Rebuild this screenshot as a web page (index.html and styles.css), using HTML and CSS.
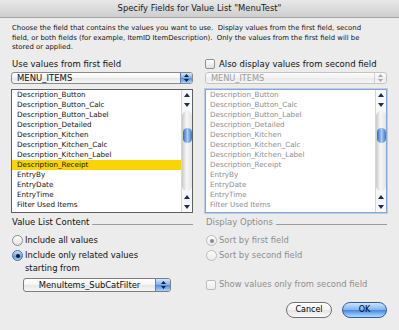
FILE: index.html
```html
<!DOCTYPE html>
<html lang="en">

<head>
    <meta charset="UTF-8">
    <meta name="viewport" content="width=device-width, initial-scale=1.0">
    <title>Specify Fields for Value List</title>
    <link rel="stylesheet" href="styles.css">
</head>

<body>
    <div class="window">
        <div class="titlebar">Specify Fields for Value List "MenuTest"</div>

        <div class="content">
            <p class="desc">Choose the field that contains the values you want to use.&nbsp; Display values from the first field, second<br>
                field, or both fields (for example, ItemID ItemDescription).&nbsp; Only the values from the first field will be<br>
                stored or applied.</p>

            <div class="cols top">
                <!-- first field -->
                <div class="col">
                    <div class="label">Use values from first field</div>
                    <div class="popup">
                        <span class="popup-text">MENU_ITEMS</span>
                        <span class="popup-btn">
                            <svg width="5" height="8" viewBox="0 0 5 8"><path d="M2.5 0L5 3H0z M2.5 8L0 5h5z" /></svg>
                        </span>
                    </div>
                    <div class="list">
                        <ul class="items">
                            <li>Description_Button</li>
                            <li>Description_Button_Calc</li>
                            <li>Description_Button_Label</li>
                            <li>Description_Detailed</li>
                            <li>Description_Kitchen</li>
                            <li>Description_Kitchen_Calc</li>
                            <li>Description_Kitchen_Label</li>
                            <li class="selected">Description_Receipt</li>
                            <li>EntryBy</li>
                            <li>EntryDate</li>
                            <li>EntryTime</li>
                            <li>Filter Used Items</li>
                        </ul>
                        <div class="scrollbar">
                            <span class="arrow"><svg width="6" height="4" viewBox="0 0 6 4"><path d="M3 0L6 4H0z" /></svg></span>
                            <span class="arrow"><svg width="6" height="4" viewBox="0 0 6 4"><path d="M3 4L0 0h6z" /></svg></span>
                            <span class="track"><span class="thumb"></span></span>
                            <span class="arrow"><svg width="6" height="4" viewBox="0 0 6 4"><path d="M3 0L6 4H0z" /></svg></span>
                            <span class="arrow"><svg width="6" height="4" viewBox="0 0 6 4"><path d="M3 4L0 0h6z" /></svg></span>
                        </div>
                    </div>
                </div>

                <!-- second field -->
                <div class="col">
                    <div class="label check-row">
                        <span class="checkbox"></span>
                        <span>Also display values from second field</span>
                    </div>
                    <div class="popup disabled">
                        <span class="popup-text">MENU_ITEMS</span>
                        <span class="popup-btn">
                            <svg width="5" height="8" viewBox="0 0 5 8"><path d="M2.5 0L5 3H0z M2.5 8L0 5h5z" /></svg>
                        </span>
                    </div>
                    <div class="list disabled">
                        <ul class="items">
                            <li>Description_Button</li>
                            <li>Description_Button_Calc</li>
                            <li>Description_Button_Label</li>
                            <li>Description_Detailed</li>
                            <li>Description_Kitchen</li>
                            <li>Description_Kitchen_Calc</li>
                            <li>Description_Kitchen_Label</li>
                            <li>Description_Receipt</li>
                            <li>EntryBy</li>
                            <li>EntryDate</li>
                            <li>EntryTime</li>
                            <li>Filter Used Items</li>
                        </ul>
                        <div class="scrollbar">
                            <span class="arrow"><svg width="6" height="4" viewBox="0 0 6 4"><path d="M3 0L6 4H0z" /></svg></span>
                            <span class="arrow"><svg width="6" height="4" viewBox="0 0 6 4"><path d="M3 4L0 0h6z" /></svg></span>
                            <span class="track"><span class="thumb"></span></span>
                            <span class="arrow"><svg width="6" height="4" viewBox="0 0 6 4"><path d="M3 0L6 4H0z" /></svg></span>
                            <span class="arrow"><svg width="6" height="4" viewBox="0 0 6 4"><path d="M3 4L0 0h6z" /></svg></span>
                        </div>
                    </div>
                </div>
            </div>

            <div class="cols options">
                <div class="col">
                    <div class="group-title"><span>Value List Content</span><span class="rule"></span></div>
                    <div class="opt first"><span class="radio"></span><span>Include all values</span></div>
                    <div class="opt"><span class="radio on"></span><span>Include only related values<br>starting from</span></div>
                    <div class="popup small">
                        <span class="popup-text">MenuItems_SubCatFilter</span>
                        <span class="popup-btn">
                            <svg width="5" height="8" viewBox="0 0 5 8"><path d="M2.5 0L5 3H0z M2.5 8L0 5h5z" /></svg>
                        </span>
                    </div>
                </div>

                <div class="col muted">
                    <div class="group-title"><span>Display Options</span><span class="rule"></span></div>
                    <div class="opt first"><span class="radio dot"></span><span>Sort by first field</span></div>
                    <div class="opt"><span class="radio"></span><span>Sort by second field</span></div>
                    <div class="opt check-opt"><span class="checkbox"></span><span>Show values only from second field</span></div>
                </div>
            </div>

            <div class="buttons">
                <span class="btn">Cancel</span>
                <span class="btn default">OK</span>
            </div>
        </div>
    </div>
</body>

</html>
```

FILE: styles.css
```css
* {
    margin: 0;
    padding: 0;
    box-sizing: border-box;
}

body {
    font-family: "Lucida Grande", "DejaVu Sans", sans-serif;
    background: #ececec;
    color: #111;
}

.window {
    width: 399px;
    height: 330px;
    background: #ececec;
    overflow: hidden;
}

.titlebar {
    height: 18px;
    line-height: 17px;
    text-align: center;
    font-size: 8.4px;
    color: #1a1a1a;
    background: linear-gradient(#e8e8e8, #cecece);
    border-bottom: 1px solid #a3a3a3;
}

.content {
    padding: 6px 12px 0 11px;
}

.desc {
    font-size: 6.9px;
    line-height: 9.7px;
    padding-left: 1px;
    white-space: nowrap;
}

.cols {
    display: grid;
    grid-template-columns: 182px 182px;
    column-gap: 12px;
}

.top {
    margin-top: 4.5px;
}

.label {
    height: 12px;
    line-height: 12px;
    font-size: 8.5px;
    padding-left: 1px;
}

.check-row {
    display: flex;
    align-items: center;
    gap: 4px;
    padding-left: 0;
}

.checkbox {
    width: 10px;
    height: 10px;
    border: 1px solid #8f8f8f;
    border-radius: 2px;
    background: linear-gradient(#ffffff, #e2e2e2);
    flex-shrink: 0;
}

/* popup menus */
.popup {
    display: flex;
    height: 12px;
    margin-top: 2.5px;
    border: 1px solid #8a8a8a;
    border-radius: 3px;
    background: linear-gradient(#ffffff, #f4f4f4 50%, #e6e6e6 51%, #f7f7f7);
    overflow: hidden;
}

.popup-text {
    flex: 1;
    font-size: 8.5px;
    line-height: 10px;
    padding-left: 5px;
}

.popup-btn {
    width: 12px;
    display: flex;
    align-items: center;
    justify-content: center;
    border-left: 1px solid #5d7fb3;
    background: linear-gradient(#d3e6fc, #7eb0ee 50%, #4b8ce3 51%, #a9d3fb);
}

.popup-btn svg {
    fill: #14203a;
}

.popup.disabled {
    border-color: #c4c4c4;
    background: linear-gradient(#fbfbfb, #f2f2f2 50%, #eaeaea 51%, #f6f6f6);
}

.popup.disabled .popup-text {
    color: #9a9a9a;
    font-size: 8.2px;
}

.popup.disabled .popup-btn {
    border-left-color: #d0d0d0;
    background: transparent;
}

.popup.disabled .popup-btn svg {
    fill: #a8a8a8;
}

.popup.small {
    width: 148px;
    height: 14px;
    margin: 3px 0 0 12px;
    border-color: #7d7d7d;
}

.popup.small .popup-text {
    line-height: 12px;
    text-align: center;
    padding-left: 0;
    font-size: 8.4px;
}

.popup.small .popup-btn {
    width: 15px;
}

/* lists */
.list {
    display: flex;
    height: 124px;
    margin-top: 5px;
    border: 1px solid #5f5f5f;
    background: #fff;
}

.items {
    flex: 1;
    list-style: none;
    padding-top: 0;
}

.items li {
    height: 10px;
    line-height: 10px;
    padding-left: 5px;
    font-size: 7.2px;
    color: #111;
    white-space: nowrap;
}

.items li.selected {
    background: #fbd503;
}

.list.disabled {
    border-color: #86a7d4;
    box-shadow: 0 0 0 1px #b9cde9;
}

.list.disabled .items li {
    color: #8d8d8d;
    padding-left: 4px;
}

.scrollbar {
    width: 11px;
    display: flex;
    flex-direction: column;
    border-left: 1px solid #d6d6d6;
    background: #f7f7f7;
}

.arrow {
    height: 10px;
    display: flex;
    align-items: center;
    justify-content: center;
}

.arrow svg {
    fill: #1d2d4d;
}

.track {
    flex: 1;
    margin: 1px 0;
    border-radius: 5px;
    background: linear-gradient(90deg, #c9c9c9, #f6f6f6 45%, #e4e4e4);
    display: flex;
    flex-direction: column;
    align-items: center;
}

.thumb {
    width: 9px;
    height: 15px;
    margin-top: 17px;
    border-radius: 5px;
    background: linear-gradient(90deg, #2f68bd, #a8cdf6 50%, #3a74c8);
}

/* option groups */
.options {
    margin-top: 3px;
}

.group-title {
    display: flex;
    align-items: flex-end;
    height: 12px;
    line-height: 12px;
    font-size: 8.5px;
    padding-left: 1px;
}

.rule {
    flex: 1;
    height: 1px;
    margin: 0 0 3px 3px;
    background: #9c9c9c;
}

.opt {
    display: flex;
    align-items: flex-start;
    gap: 2px;
    margin-top: 2px;
    line-height: 13px;
    font-size: 8.4px;
    padding-left: 1px;
}

.opt.first {
    margin-top: 6px;
}

.radio {
    width: 11px;
    height: 11px;
    margin-top: 1px;
    border: 1px solid #8c8c8c;
    border-radius: 50%;
    background: linear-gradient(#ffffff, #e0e0e0);
    flex-shrink: 0;
    display: flex;
    align-items: center;
    justify-content: center;
}

.radio.on {
    border-color: #4a6ea8;
    background: linear-gradient(#cfe2fb, #78aaec 50%, #4d8de2 51%, #a8d2fb);
}

.radio.on::after,
.radio.dot::after {
    content: "";
    width: 4px;
    height: 4px;
    border-radius: 50%;
    background: #10182a;
}

.radio.dot::after {
    background: #8a8a8a;
}

.muted {
    color: #8e8e8e;
}

.muted .radio,
.muted .checkbox {
    border-color: #bdbdbd;
    background: linear-gradient(#fbfbfb, #ececec);
}

.check-opt {
    margin-top: 16px;
    align-items: center;
}

.check-opt .checkbox {
    margin-right: 1px;
}

/* buttons */
.buttons {
    display: flex;
    justify-content: flex-end;
    gap: 10px;
    margin-top: 10px;
}

.btn {
    width: 46px;
    height: 16px;
    line-height: 14px;
    text-align: center;
    font-size: 8px;
    color: #000;
    border: 1px solid #6f6f6f;
    border-radius: 8px;
    background: linear-gradient(#ffffff, #f3f3f3 50%, #e3e3e3 51%, #fbfbfb);
}

.btn.default {
    width: 45px;
    border-color: #2f5f9f;
    background: linear-gradient(#cfe4fc, #7fb2ef 50%, #3f86e4 51%, #b3dcfd);
}
```
